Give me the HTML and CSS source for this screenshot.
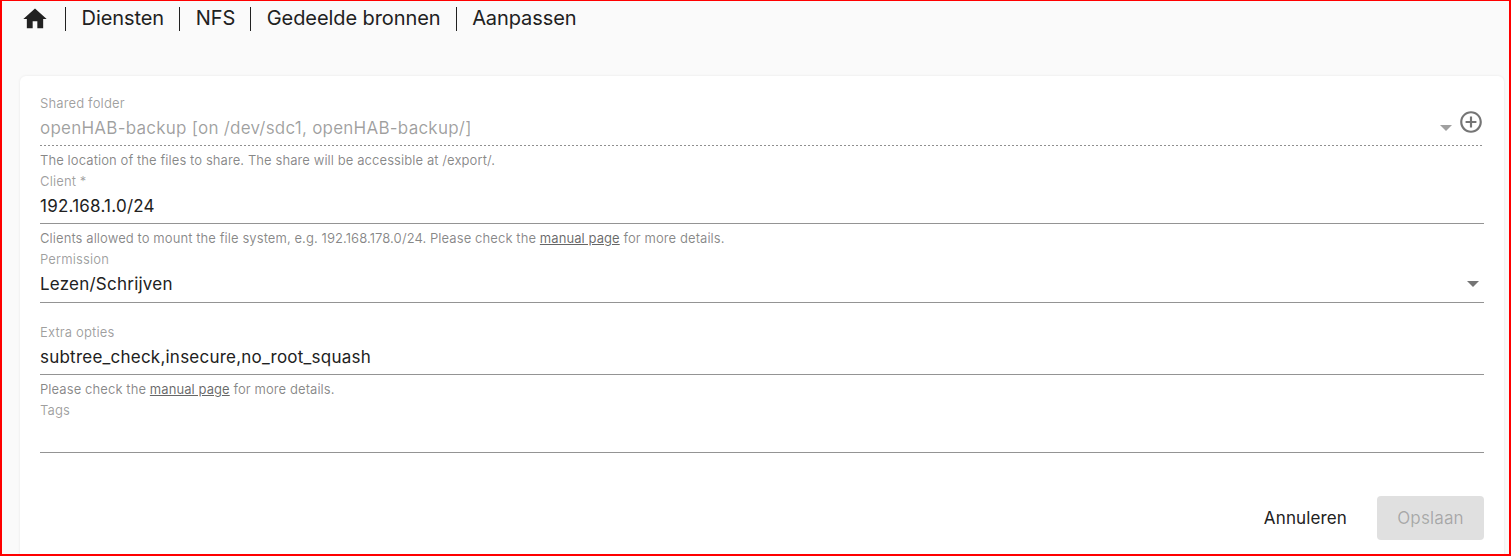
FILE: index.html
```html
<!DOCTYPE html>
<html lang="en">
<head>
    <meta charset="UTF-8">
    <meta name="viewport" content="width=device-width, initial-scale=1.0">
    <title>NFS - Gedeelde bronnen</title>
    <link rel="stylesheet" href="styles.css">
</head>
<body>
    <div class="frame">
        <nav class="breadcrumb">
            <a class="crumb crumb-home" href="#" aria-label="Home">
                <svg width="28" height="28" viewBox="0 0 24 24"><path d="M10 20v-6h4v6h5v-8h3L12 3 2 12h3v8z"/></svg>
            </a>
            <a class="crumb" href="#">Diensten</a>
            <a class="crumb" href="#">NFS</a>
            <a class="crumb" href="#">Gedeelde bronnen</a>
            <a class="crumb" href="#">Aanpassen</a>
        </nav>

        <form class="card">
            <div class="field">
                <label class="field-label">Shared folder</label>
                <div class="field-control field-disabled">
                    <span class="field-value">openHAB-backup [on /dev/sdc1, openHAB-backup/]</span>
                    <span class="arrow"></span>
                    <svg class="add-icon" width="26" height="26" viewBox="0 0 24 24"><path d="M13 7h-2v4H7v2h4v4h2v-4h4v-2h-4V7zm-1-5C6.48 2 2 6.48 2 12s4.48 10 10 10 10-4.48 10-10S17.52 2 12 2zm0 18c-4.41 0-8-3.59-8-8s3.59-8 8-8 8 3.59 8 8-3.59 8-8 8z"/></svg>
                </div>
                <div class="field-hint">The location of the files to share. The share will be accessible at /export/.</div>
            </div>

            <div class="field">
                <label class="field-label">Client *</label>
                <div class="field-control">
                    <span class="field-value">192.168.1.0/24</span>
                </div>
                <div class="field-hint">Clients allowed to mount the file system, e.g. 192.168.178.0/24. Please check the <a href="#">manual page</a> for more details.</div>
            </div>

            <div class="field">
                <label class="field-label">Permission</label>
                <div class="field-control field-select">
                    <span class="field-value">Lezen/Schrijven</span>
                    <span class="arrow"></span>
                </div>
                <div class="field-hint field-hint-empty"></div>
            </div>

            <div class="field">
                <label class="field-label">Extra opties</label>
                <div class="field-control">
                    <span class="field-value">subtree_check,insecure,no_root_squash</span>
                </div>
                <div class="field-hint">Please check the <a href="#">manual page</a> for more details.</div>
            </div>

            <div class="field">
                <label class="field-label">Tags</label>
                <div class="field-control">
                    <span class="field-value"></span>
                </div>
            </div>

            <div class="actions">
                <button type="button" class="btn btn-cancel">Annuleren</button>
                <button type="button" class="btn btn-save" disabled>Opslaan</button>
            </div>
        </form>
    </div>
</body>
</html>
```

FILE: styles.css
```css
* {
    margin: 0;
    padding: 0;
    box-sizing: border-box;
}

body {
    font-family: Inter, "Noto Sans", Arial, sans-serif;
    background-color: #fafafa;
    color: #212121;
}

.frame {
    height: 556px;
    border: 2px solid #ff0000;
    border-top-width: 1px;
    overflow: hidden;
    padding: 0 5px 0 18px;
}

/* breadcrumb */
.breadcrumb {
    display: flex;
    align-items: center;
    height: 35px;
    margin-bottom: 40px;
}

.crumb {
    display: flex;
    align-items: center;
    height: 24px;
    padding: 0 15px 2px 15.6px;
    border-left: 1px solid #212121;
    color: #212121;
    font-size: 20px;
    letter-spacing: -0.08px;
    text-decoration: none;
    white-space: nowrap;
}

.crumb-home {
    border-left: none;
    padding: 0 16px 0 1px;
}

.crumb-home svg {
    fill: #212121;
}

/* card */
.card {
    background: white;
    border-radius: 6px;
    height: 500px;
    padding: 19px 20px 0 20px;
    box-shadow: 0 0 3px rgba(0, 0, 0, 0.08);
}

.field-label {
    display: block;
    height: 16px;
    line-height: 16px;
    font-size: 13px;
    letter-spacing: 0.13px;
    color: rgba(0, 0, 0, 0.38);
}

.field-control {
    display: flex;
    align-items: center;
    height: 35px;
    padding-bottom: 1px;
    border-bottom: 1px solid #949494;
}

.field-select {
    height: 36px;
}

.field-value {
    flex: 1;
    font-size: 17px;
    letter-spacing: 0.23px;
    line-height: 24px;
}

/* dashed line is a gradient, a dashed border gives too long dashes */
.field-disabled {
    padding-bottom: 1px;
    border-bottom: none;
    background: repeating-linear-gradient(to right, #8f8f8f 0, #8f8f8f 2px, transparent 2px, transparent 4px) left bottom / 100% 1px no-repeat;
}

.field-disabled .field-value {
    color: rgba(0, 0, 0, 0.38);
}

.field-disabled .arrow {
    margin: 0 6px 0 0;
    border-top-color: #a0a0a0;
}

.arrow {
    width: 0;
    height: 0;
    margin-right: 5px;
    border-left: 6px solid transparent;
    border-right: 6px solid transparent;
    border-top: 6px solid #757575;
}

.add-icon {
    margin-top: -12px;
    fill: #757575;
}

.field-hint {
    height: 27px;
    padding-top: 6px;
    line-height: 16px;
    font-size: 13px;
    letter-spacing: 0.07px;
    color: rgba(0, 0, 0, 0.47);
}

.field-hint a {
    color: rgba(0, 0, 0, 0.6);
}

.field-hint-empty {
    height: 21px;
}

/* buttons */
.actions {
    display: flex;
    justify-content: flex-end;
    align-items: center;
    gap: 14px;
    margin-top: 43px;
}

.btn {
    height: 44px;
    padding: 0 16px;
    border: none;
    border-radius: 4px;
    background: none;
    font-family: inherit;
    font-size: 17px;
    letter-spacing: 0.13px;
    color: #212121;
    cursor: pointer;
}

.btn-save {
    width: 107px;
    background: #e0e0e0;
    color: rgba(0, 0, 0, 0.26);
    cursor: default;
}
```
